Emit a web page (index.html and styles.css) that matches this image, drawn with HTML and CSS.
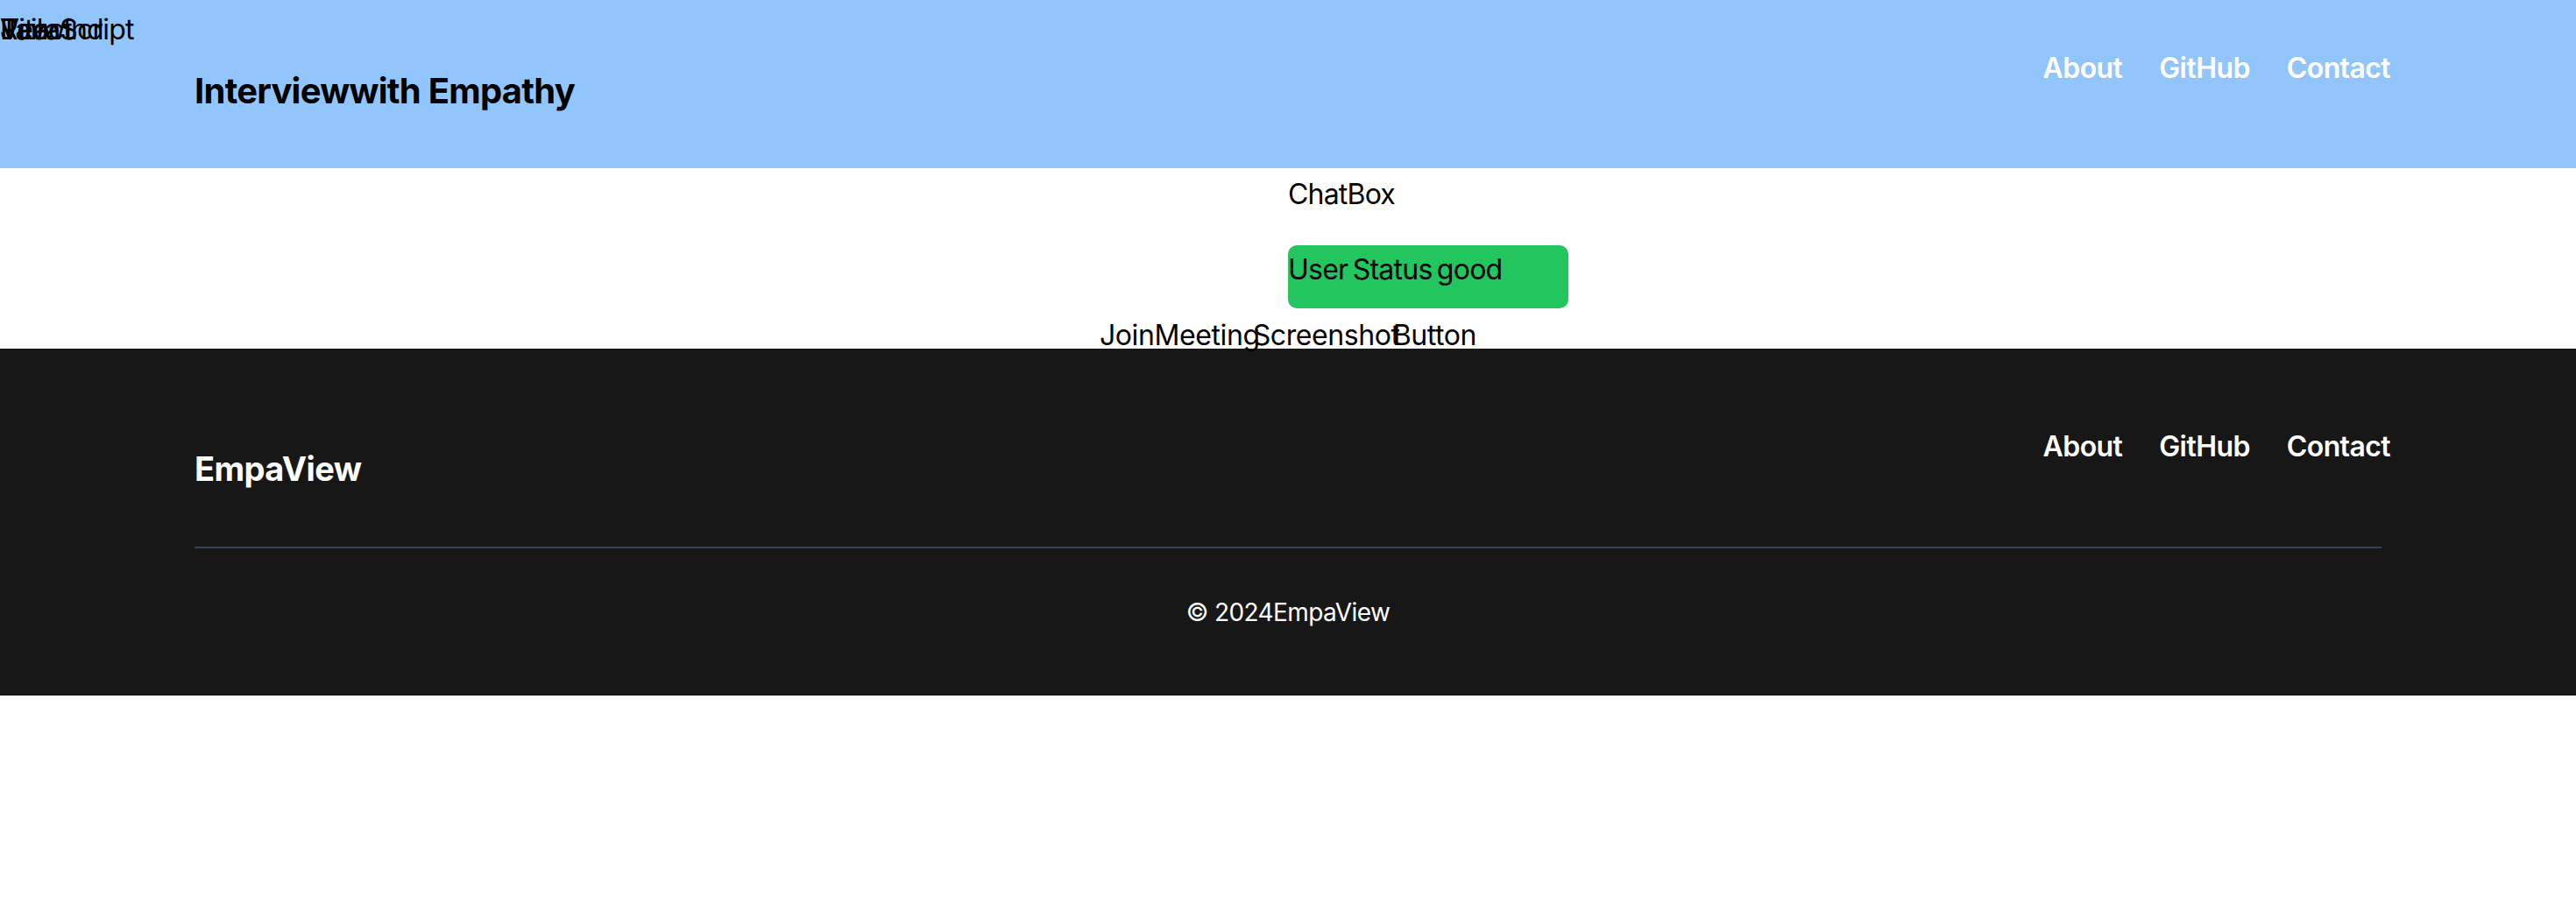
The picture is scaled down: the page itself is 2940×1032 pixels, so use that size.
FILE: index.html
```html
<!DOCTYPE html>
<html lang="en">
<head>
<meta charset="utf-8">
<title>Interview with Empathy</title>
<link rel="stylesheet" href="styles.css">
</head>
<body>
<div class="stack">
  <span class="stack-item">Vite</span>
  <span class="stack-item">React</span>
  <span class="stack-item">Tailwind</span>
  <span class="stack-item">JavaScript</span>
</div>
<header class="site-header">
  <div class="container header-inner">
    <div class="brand">Interview<span>with Empathy</span></div>
    <nav class="nav">
      <a href="#">About</a>
      <a href="#">GitHub</a>
      <a href="#">Contact</a>
    </nav>
  </div>
</header>
<main class="main">
  <div class="stage">
    <div class="video-col"></div>
    <div class="side-col">
      <div class="chatbox">ChatBox</div>
      <div class="status">User Status good</div>
    </div>
  </div>
  <div class="actions">
    <span class="action">JoinMeeting</span>
    <span class="action">Screenshot</span>
    <span class="action">Button</span>
  </div>
</main>
<footer class="site-footer">
  <div class="container">
    <div class="footer-top">
      <div class="footer-brand">EmpaView</div>
      <nav class="nav">
        <a href="#">About</a>
        <a href="#">GitHub</a>
        <a href="#">Contact</a>
      </nav>
    </div>
    <div class="footer-rule"></div>
    <p class="copyright">© 2024EmpaView</p>
  </div>
</footer>
</body>
</html>
```

FILE: styles.css
```css
html, body {
  margin: 0;
  padding: 0;
}
body {
  font-family: Inter, "Noto Sans", "Liberation Sans", sans-serif;
  color: #000;
  background: #fff;
  position: relative;
}
.stack {
  position: absolute;
  left: 0;
  top: 10px;
  z-index: 2;
}
.stack-item {
  position: absolute;
  left: 0;
  top: 0;
  font-size: 32px;
  line-height: 48px;
  letter-spacing: -0.8px;
  white-space: nowrap;
}
.container {
  max-width: 2560px;
  margin: 0 auto;
  padding: 0 32px;
  box-sizing: border-box;
}
.site-header {
  background: #93c5fd;
  height: 192px;
}
.header-inner {
  display: flex;
  justify-content: space-between;
  align-items: flex-start;
  padding-top: 54px;
}
.brand {
  font-size: 40px;
  font-weight: 700;
  line-height: 56px;
  margin-top: 22px;
  letter-spacing: -0.75px;
}
.nav {
  display: flex;
  gap: 42px;
  margin-right: -10px;
}
.nav a {
  color: #fff;
  text-decoration: none;
  font-size: 32px;
  line-height: 48px;
  font-weight: 600;
  letter-spacing: -0.6px;
}
.main {
  height: 206px;
}
.stage {
  display: grid;
  grid-template-columns: 1fr 1fr;
}
.side-col {
  padding-top: 6px;
}
.chatbox {
  font-size: 32px;
  line-height: 48px;
  letter-spacing: -0.8px;
}
.status {
  margin-top: 34px;
  width: 320px;
  height: 72px;
  box-sizing: border-box;
  padding-top: 4px;
  background: #22c55e;
  border-radius: 10px;
  font-size: 32px;
  line-height: 48px;
  letter-spacing: -0.75px;
  word-spacing: -3px;
}
.actions {
  display: flex;
  justify-content: center;
  margin-top: 7px;
}
.action {
  font-size: 32px;
  line-height: 48px;
  letter-spacing: -0.4px;
}
.action + .action {
  margin-left: -8px;
}
.site-footer {
  background: #171717;
  color: #fff;
  height: 396px;
  padding-top: 88px;
  box-sizing: border-box;
}
.footer-top {
  display: flex;
  justify-content: space-between;
  align-items: flex-start;
}
.footer-brand {
  font-size: 38px;
  font-weight: 700;
  line-height: 56px;
  margin-top: 21px;
  letter-spacing: -0.6px;
}
.footer-rule {
  margin-top: 61px;
  height: 2px;
  background: #374151;
}
.copyright {
  margin: 53px 0 0;
  text-align: center;
  font-size: 28px;
  line-height: 40px;
  letter-spacing: -0.6px;
}
```
